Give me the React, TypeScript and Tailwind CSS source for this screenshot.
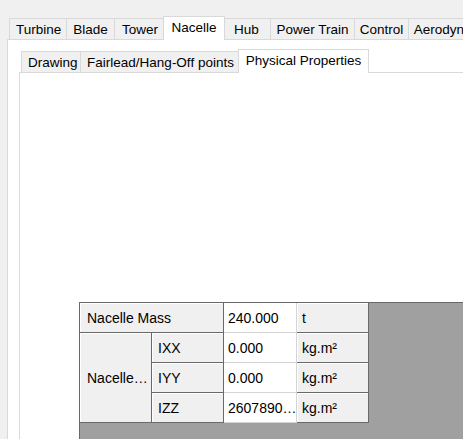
import React from 'react';

type Tab = { label: string; width: number };

const mainTabs: Tab[] = [
  { label: 'Turbine', width: 58 },
  { label: 'Blade', width: 48 },
  { label: 'Tower', width: 50 },
  { label: 'Nacelle', width: 58 },
  { label: 'Hub', width: 48 },
  { label: 'Power Train', width: 84 },
  { label: 'Control', width: 54 },
  { label: 'Aerodynamics', width: 96 },
];

const subTabs: Tab[] = [
  { label: 'Drawing', width: 60 },
  { label: 'Fairlead/Hang-Off points', width: 159 },
  { label: 'Physical Properties', width: 127 },
];

function TabStrip({ tabs, active, className = '' }: { tabs: Tab[]; active: string; className?: string }) {
  return (
    <div className={`relative z-10 flex h-[23px] items-end ${className}`}>
      {tabs.map((tab, i) => {
        const sel = tab.label === active;
        if (sel) {
          return (
            <div
              key={tab.label}
              style={{ width: tab.width + 4 }}
              className="relative -mx-[2px] -mb-px flex h-[24px] shrink-0 items-start justify-center whitespace-nowrap border border-b-0 border-[#d9d9d9] bg-white pt-[2px] leading-[18px]"
            >
              {tab.label}
            </div>
          );
        }
        return (
          <div
            key={tab.label}
            style={{ width: tab.width }}
            className={`flex h-[21px] shrink-0 items-center justify-center whitespace-nowrap border-t border-r border-[#d9d9d9] bg-[#f0f0f0] leading-[19px] ${i === 0 ? 'border-l' : ''} ${tabs[i + 1]?.label === active ? 'border-r-0' : ''} ${tabs[i - 1]?.label === active ? 'border-l-0' : ''} ${i === 0 ? 'justify-start pl-[6px]' : ''}`}
          >
            {tab.label}
          </div>
        );
      })}
    </div>
  );
}

const headCell = 'flex items-center pt-px bg-[#f0f0f0] border-r border-b border-[#696969] shadow-[inset_1px_1px_0_#ffffff]';
const valueCell = 'flex items-center pt-px bg-white border-r border-b border-[#d4d4d4] pl-[4px] overflow-hidden whitespace-nowrap';

function PropertyGrid() {
  return (
    <div className="ml-[59px] mt-[229px] flex-1 border-t border-l border-[#696969] bg-[#a0a0a0]">
      <div className="grid grid-cols-[72px_72px_73px_72px] grid-rows-[30px_30px_30px_30px] text-[14px] text-black">
        <div className={`${headCell} col-span-2 pl-[7px]`}>Nacelle Mass</div>
        <div className={valueCell}>240.000</div>
        <div className={`${headCell} pl-[5px]`}>t</div>

        <div className={`${headCell} row-span-3 pl-[7px]`}>Nacelle…</div>
        <div className={`${headCell} pl-[6px]`}>IXX</div>
        <div className={valueCell}>0.000</div>
        <div className={`${headCell} pl-[5px]`}>kg.m²</div>

        <div className={`${headCell} pl-[6px]`}>IYY</div>
        <div className={valueCell}>0.000</div>
        <div className={`${headCell} pl-[5px]`}>kg.m²</div>

        <div className={`${headCell} pl-[6px]`}>IZZ</div>
        <div className={valueCell}>2607890…</div>
        <div className={`${headCell} pl-[5px]`}>kg.m²</div>
      </div>
    </div>
  );
}

export default function App() {
  return (
    <div className="flex h-[439px] w-[463px] flex-col overflow-hidden bg-[#f0f0f0] pt-[16px] font-['Liberation_Sans',Arial,sans-serif] text-[13.5px] text-black">
      <TabStrip tabs={mainTabs} active="Nacelle" className="ml-[9px]" />
      <div className="ml-[7px] flex flex-1 flex-col border-t border-l border-[#d9d9d9] bg-white pt-[9px]">
        <TabStrip tabs={subTabs} active="Physical Properties" className="ml-[13px]" />
        <div className="ml-[11px] flex flex-1 flex-col border-t border-l border-[#d9d9d9] bg-white">
          <div className="flex flex-1">
            <PropertyGrid />
          </div>
        </div>
      </div>
    </div>
  );
}
